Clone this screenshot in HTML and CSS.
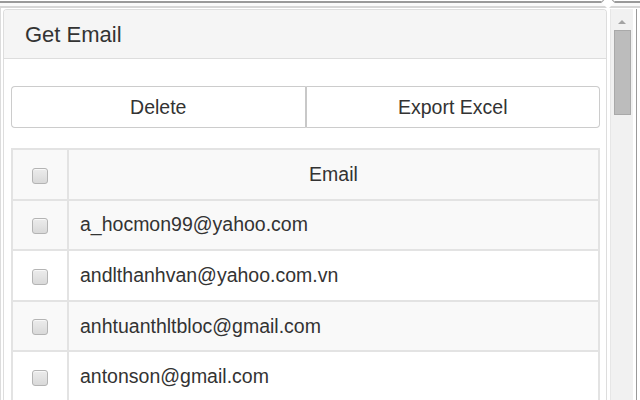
FILE: index.html
```html
<!DOCTYPE html>
<html>
<head>
<meta charset="utf-8">
<link rel="stylesheet" href="styles.css">
</head>
<body>
<div class="frame">
  <div class="frame-top">
    <div class="notch"></div>
  </div>
  <div class="content">
    <div class="main">
      <div class="panel">
        <div class="panel-heading">Get Email</div>
        <div class="panel-body">
          <div class="btn-group">
            <button class="btn">Delete</button>
            <button class="btn">Export Excel</button>
          </div>
          <table class="grid">
            <thead>
              <tr><th class="chk"><span class="cb"></span></th><th>Email</th></tr>
            </thead>
            <tbody>
              <tr class="odd"><td class="chk"><span class="cb"></span></td><td>a_hocmon99@yahoo.com</td></tr>
              <tr><td class="chk"><span class="cb"></span></td><td>andlthanhvan@yahoo.com.vn</td></tr>
              <tr class="odd"><td class="chk"><span class="cb"></span></td><td>anhtuanthltbloc@gmail.com</td></tr>
              <tr><td class="chk"><span class="cb"></span></td><td>antonson@gmail.com</td></tr>
            </tbody>
          </table>
        </div>
      </div>
    </div>
    <div class="scrollbar">
      <div class="arrow-up"></div>
      <div class="thumb"></div>
    </div>
    <div class="edge"></div>
  </div>
</div>
</body>
</html>
```

FILE: styles.css
```css
html, body {
  margin: 0;
  padding: 0;
  background: #fff;
  width: 640px;
  height: 400px;
  overflow: hidden;
  font-family: "Liberation Sans", Arial, sans-serif;
  color: #333;
}

.frame {
  width: 640px;
  height: 400px;
  display: flex;
  flex-direction: column;
}

.frame-top {
  position: relative;
  height: 3px;
  border-top: 2px solid #9a9a9a;
  border-bottom: 2px solid #d6d6d6;
  margin-top: 1px;
  background: #fafafa;
  flex: none;
}

.notch {
  position: absolute;
  left: 603px;
  top: -6px;
  width: 9px;
  height: 9px;
  background: #fff;
  border-left: 1px solid #a0a0a0;
  border-top: 1px solid #a0a0a0;
  transform: rotate(45deg);
}

.content {
  flex: 1;
  display: flex;
  min-height: 0;
  padding-top: 1px;
  border-left: 1px solid #dcdcdc;
}

.main {
  width: 604px;
  padding: 0 0 0 2px;
  flex: none;
}

.panel {
  border: 1px solid #dddddd;
  border-bottom: none;
  border-radius: 4px 4px 0 0;
  height: 100%;
  box-sizing: border-box;
}

.panel-heading {
  height: 49px;
  box-sizing: border-box;
  background: #f5f5f5;
  border-bottom: 1px solid #dddddd;
  border-radius: 3px 3px 0 0;
  padding: 11px 0 0 21px;
  font-size: 22px;
  line-height: 28px;
}

.panel-body {
  padding: 27px 6px 0 7px;
}

.btn-group {
  display: flex;
  height: 42px;
}

.btn {
  flex: 1;
  margin: 0;
  background: #fff;
  border: 1px solid #cccccc;
  font-family: "Liberation Sans", Arial, sans-serif;
  font-size: 19.5px;
  color: #333;
  padding: 0;
}

.btn:first-child {
  border-radius: 4px 0 0 4px;
  border-right: 2px solid #c8c8c8;
}

.btn:last-child {
  border-radius: 0 4px 4px 0;
  border-left: none;
}

.grid {
  margin-top: 20px;
  width: 100%;
  border-collapse: collapse;
  border: 2px solid #e3e3e3;
  font-size: 19.5px;
}

.grid th, .grid td {
  border: 2px solid #e3e3e3;
  height: 48.6px;
  padding: 0 0 0 11px;
  text-align: left;
  font-weight: normal;
}

.grid th {
  text-align: center;
  padding: 0;
  background: #f9f9f9;
}

.grid th.chk, .grid td.chk {
  width: 54px;
  padding: 0;
  text-align: center;
}

.grid tr.odd td {
  background: #f9f9f9;
}

.cb {
  display: inline-block;
  width: 14px;
  height: 14px;
  border: 1px solid #b4b4b4;
  border-radius: 3px;
  background: linear-gradient(#ececec, #d9d9d9);
  vertical-align: middle;
  box-shadow: inset 0 1px 0 #f8f8f8;
}

.scrollbar {
  width: 22px;
  flex: none;
  margin-left: 3px;
  background: #f1f1f1;
  border-left: 1px solid #e6e6e6;
  display: flex;
  flex-direction: column;
  align-items: center;
}

.arrow-up {
  margin-top: 11px;
  width: 0;
  height: 0;
  border-left: 4px solid transparent;
  border-right: 4px solid transparent;
  border-bottom: 4px solid #a3a3a3;
}

.thumb {
  margin-top: 6px;
  width: 15px;
  height: 83px;
  background: #bcbcbc;
  border: 1px solid #a9a9a9;
}

.edge {
  width: 1px;
  flex: none;
  background: #9a9a9a;
  margin-left: 3px;
}
```
